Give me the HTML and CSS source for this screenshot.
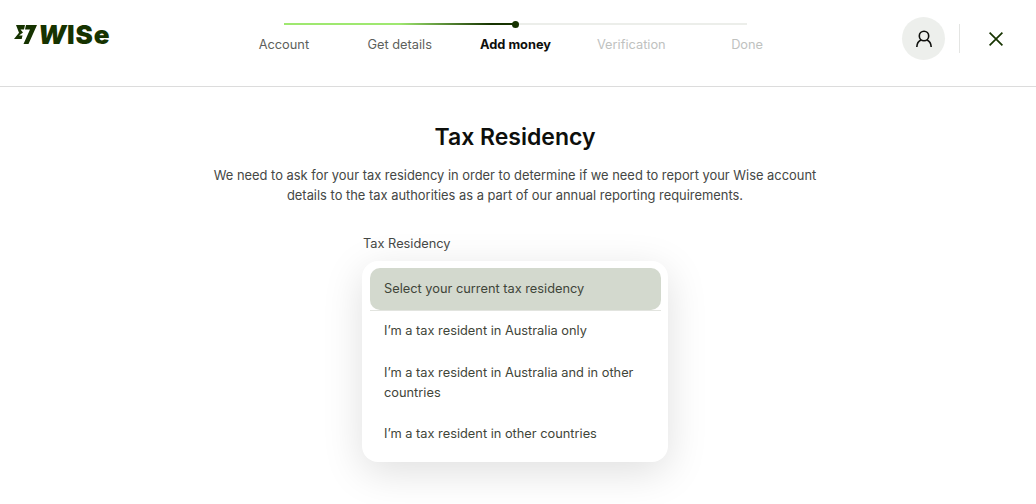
FILE: index.html
```html
<!DOCTYPE html>
<html lang="en">
<head>
    <meta charset="UTF-8">
    <meta name="viewport" content="width=device-width, initial-scale=1.0">
    <title>Tax Residency</title>
    <link rel="stylesheet" href="styles.css">
</head>
<body>

    <!-- Top bar -->
    <header class="topbar">
        <div class="logo">
            <svg class="logo-flag" width="23" height="19" viewBox="0 0 23 19">
                <path fill="#163300" d="M2 0H11L10 4.500H6.500L9 7.500L5 10.500H8.500L7.700 14H0L5 7.800Z"/>
                <path fill="#163300" d="M12 0H23L14.500 19H9.500L16 4.500H11Z"/>
            </svg>
            <span class="logo-word"><span class="logo-w">W</span>ISe</span>
        </div>

        <div class="stepper">
            <div class="track">
                <div class="track-done"></div>
                <div class="track-dot"></div>
            </div>
            <ol class="steps">
                <li>Account</li>
                <li>Get details</li>
                <li class="current">Add money</li>
                <li class="todo">Verification</li>
                <li class="todo">Done</li>
            </ol>
        </div>

        <div class="actions">
            <button class="avatar" aria-label="Profile">
                <svg width="18" height="18" viewBox="0 0 18 18" fill="none" stroke="#0e0f0c" stroke-width="1.600">
                    <circle cx="9" cy="6" r="4.700"/>
                    <path d="M1.800 17C2 13.500 4 10.800 6 10M16.200 17C16 13.500 14 10.800 12 10"/>
                </svg>
            </button>
            <div class="divider"></div>
            <button class="close" aria-label="Close">
                <svg width="14" height="14" viewBox="0 0 14 14" fill="none" stroke="#163300" stroke-width="1.700">
                    <path d="M0.600 0.600L13.400 13.400M13.400 0.600L0.600 13.400"/>
                </svg>
            </button>
        </div>
    </header>

    <!-- Form -->
    <main class="content">
        <h1>Tax Residency</h1>
        <p class="intro">We need to ask for your tax residency in order to determine if we need to report your Wise account details to the tax authorities as a part of our annual reporting requirements.</p>

        <div class="field">
            <label class="field-label">Tax Residency</label>
            <ul class="menu">
                <li class="selected">Select your current tax residency</li>
                <li>I’m a tax resident in Australia only</li>
                <li>I’m a tax resident in Australia and in other countries</li>
                <li>I’m a tax resident in other countries</li>
            </ul>
        </div>
    </main>

</body>
</html>
```

FILE: styles.css
```css
body {
    font-family: 'Inter', sans-serif;
    margin: 0;
    padding: 0;
    height: 504px;
    overflow: hidden;
    background: #fff;
    color: #454745;
}

button {
    border: none;
    background: none;
    padding: 0;
    cursor: pointer;
}

.topbar {
    display: flex;
    height: 86px;
    border-bottom: 1px solid #dcdcdc;
}

.logo {
    display: flex;
    align-items: flex-start;
    gap: 1px;
    height: 19px;
    margin: 25px 0 0 14px;
    width: 212px;
}

.logo-flag {
    flex: none;
}

.logo-word {
    font-size: 26px;
    font-weight: 900;
    letter-spacing: 0.900px;
    line-height: 19px;
    color: #163300;
}

.logo-w {
    font-style: italic;
}

.stepper {
    width: 579px;
    padding-top: 23px;
}

.track {
    display: flex;
    align-items: center;
    height: 2px;
    margin: 0 58px;
    background: #eceeea;
}

.track-done {
    width: 230px;
    height: 2px;
    background: linear-gradient(to right, #9fe870 0%, #9fe870 50%, #163300 90%);
}

.track-dot {
    width: 7px;
    height: 7px;
    border-radius: 50%;
    background: #163300;
    margin-left: -2px;
}

.steps {
    display: grid;
    grid-template-columns: repeat(5, 1fr);
    list-style: none;
    margin: 11px 0 0;
    padding: 0;
    text-align: center;
    font-size: 12.800px;
    line-height: 18px;
    color: #5d5f5c;
}

.current {
    font-weight: 700;
    color: #0e0f0c;
}

.todo {
    color: #c0c2bf;
}

.actions {
    display: flex;
    align-items: center;
    margin-left: 97px;
    padding-bottom: 9px;
}

.avatar {
    display: flex;
    align-items: center;
    justify-content: center;
    width: 43px;
    height: 43px;
    border-radius: 50%;
    background: #edefec;
}

.divider {
    width: 1px;
    height: 29px;
    background: #e4e5e3;
    margin: 0 29px 0 14px;
}

.close {
    display: flex;
}

.content {
    width: 1030px;
    display: flex;
    flex-direction: column;
    align-items: center;
}

h1 {
    font-size: 23px;
    font-weight: 600;
    line-height: 30px;
    margin: 35px 0 0;
    color: #0e0f0c;
}

.intro {
    width: 620px;
    margin: 14px 0 0;
    font-size: 12.900px;
    line-height: 20px;
    text-align: center;
}

.field {
    width: 306px;
    margin-top: 29px;
}

.field-label {
    display: block;
    font-size: 12.800px;
    line-height: 18px;
    margin-left: 1px;
}

.menu {
    list-style: none;
    margin: 8px 0 0;
    padding: 7px 7px 8px 8px;
    background: #fff;
    border-radius: 16px;
    box-shadow: 0 10px 40px rgba(0, 0, 0, 0.13);
    font-size: 12.800px;
    line-height: 20px;
    color: #3f4539;
}

.menu li {
    padding: 11px 14px 10px;
}

.menu .selected {
    background: #d3d9ce;
    border-radius: 10px;
    padding: 11px 14px;
}

.menu .selected + li {
    border-top: 1px solid #e2e4df;
    padding: 10px 14px 11px;
}
```
